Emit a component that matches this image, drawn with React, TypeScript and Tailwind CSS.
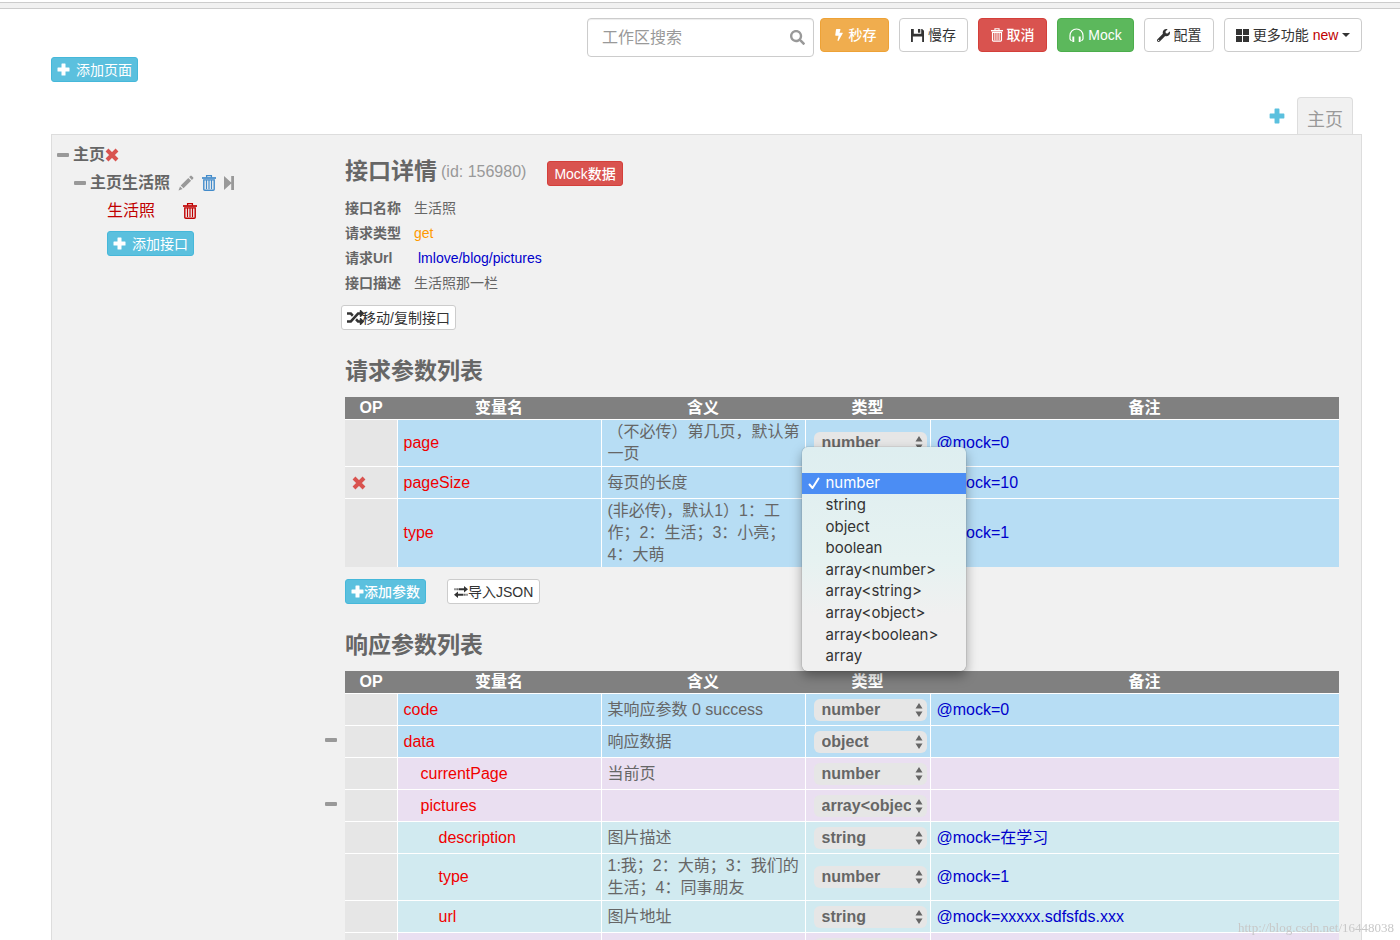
import { useState } from 'react';
import { FaBolt, FaRandom, FaSearch, FaWrench } from 'react-icons/fa';

type Param = {
  name: string;
  meaning: string;
  type: string;
  remark: string;
  level: number;
  collapsible?: boolean;
  removable?: boolean;
  menuOpen?: boolean;
};

const TYPES = [
  '',
  'number',
  'string',
  'object',
  'boolean',
  'array<number>',
  'array<string>',
  'array<object>',
  'array<boolean>',
  'array',
];

const REQUEST_PARAMS: Param[] = [
  { name: 'page', meaning: '（不必传）第几页，默认第一页', type: 'number', remark: '@mock=0', level: 0 },
  { name: 'pageSize', meaning: '每页的长度', type: 'number', remark: '@mock=10', level: 0, removable: true, menuOpen: true },
  { name: 'type', meaning: '(非必传)，默认1）1：工作；2：生活；3：小亮；4：大萌', type: 'number', remark: '@mock=1', level: 0 },
];

const RESPONSE_PARAMS: Param[] = [
  { name: 'code', meaning: '某响应参数 0 success', type: 'number', remark: '@mock=0', level: 0 },
  { name: 'data', meaning: '响应数据', type: 'object', remark: '', level: 0, collapsible: true },
  { name: 'currentPage', meaning: '当前页', type: 'number', remark: '', level: 1 },
  { name: 'pictures', meaning: '', type: 'array<object>', remark: '', level: 1, collapsible: true },
  { name: 'description', meaning: '图片描述', type: 'string', remark: '@mock=在学习', level: 2 },
  { name: 'type', meaning: '1:我；2：大萌；3：我们的生活；4：同事朋友', type: 'number', remark: '@mock=1', level: 2 },
  { name: 'url', meaning: '图片地址', type: 'string', remark: '@mock=xxxxx.sdfsfds.xxx', level: 2 },
  { name: 'sum', meaning: '一共有多少页', type: 'number', remark: '', level: 1 },
];

const LEVEL_BG = ['bg-[#b7ddf4]', 'bg-[#eadff1]', 'bg-[#d1eaf0]'];
const LEVEL_PAD = ['pl-[6px]', 'pl-[23px]', 'pl-[41px]'];

function TrashIcon({ size }: { size: number }) {
  return (
    <svg width={size} height={size + 2} viewBox="0 0 14 16" fill="none" stroke="currentColor" aria-hidden="true">
      <path d="M4.600 2.400V.7h4.800v1.700" strokeWidth="1.300" />
      <path d="M0 3h14" strokeWidth="1.700" />
      <path d="M1.800 4.900h10.400v9.300c0 .6-.4 1-1 1H2.800c-.6 0-1-.4-1-1z" strokeWidth="1.400" />
      <path d="M4.500 5v9M7 5v9M9.500 5v9" strokeWidth="1.200" />
    </svg>
  );
}

function PlusIcon({ size }: { size: number }) {
  return (
    <svg width={size} height={size} viewBox="0 0 13 13" fill="currentColor" aria-hidden="true">
      <path d="M5 .5h3a.5.5 0 0 1 .5.5v3.500H12a.5.5 0 0 1 .5.5v3a.5.5 0 0 1-.5.5H8.500V12a.5.5 0 0 1-.5.5H5a.5.5 0 0 1-.5-.5V8.500H1a.5.5 0 0 1-.5-.5V5a.5.5 0 0 1 .5-.5h3.500V1a.5.5 0 0 1 .5-.5z" />
    </svg>
  );
}

function CrossIcon() {
  return (
    <svg width="14" height="14" viewBox="0 0 14 14" fill="none" stroke="currentColor" strokeWidth="4" aria-hidden="true">
      <path d="M2 2l10 10M12 2L2 12" />
    </svg>
  );
}

function PencilIcon() {
  return (
    <svg width="16" height="16" viewBox="0 0 16 16" fill="currentColor" aria-hidden="true">
      <path d="M12.300.9a1 1 0 0 1 1.400 0l1.400 1.400a1 1 0 0 1 0 1.400l-1.200 1.200-2.800-2.800zM10.300 2.900l2.800 2.800-7.600 7.600-2.800-2.800zM2 11.400l2.600 2.600L.5 15.500z" />
    </svg>
  );
}

function SkipIcon() {
  return (
    <svg width="10" height="14" viewBox="0 0 10 14" fill="currentColor" aria-hidden="true">
      <path d="M0 0l7.200 6.500V0H10v14H7.200V7.500L0 14z" />
    </svg>
  );
}

function FloppyIcon() {
  return (
    <svg width="13" height="13" viewBox="0 0 14 14" fill="currentColor" aria-hidden="true">
      <path d="M0 0h3v5h8V0h1l2 2v12h-2V8H2v6H0z" />
      <path d="M7.500 0H10v4H7.500z" />
    </svg>
  );
}

function HeadphonesIcon() {
  return (
    <svg width="15" height="15" viewBox="0 0 15 15" fill="none" stroke="currentColor" aria-hidden="true">
      <path d="M2.500 13L1 11V7.500a6.500 6.500 0 0 1 13 0V11l-1.500 2" strokeWidth="1.200" />
      <path d="M4.300 8.500v5.500M10.700 8.500v5.500" strokeWidth="1.900" />
    </svg>
  );
}

function GridIcon() {
  return (
    <svg width="13" height="13" viewBox="0 0 13 13" fill="currentColor" aria-hidden="true">
      <path d="M0 0h6v6H0zM7 0h6v6H7zM0 7h6v6H0zM7 7h6v6H7z" />
    </svg>
  );
}

function TransferIcon() {
  return (
    <svg width="14" height="12" viewBox="0 0 14 12" fill="currentColor" aria-hidden="true">
      <path d="M4.500 2.200H10V0l4 3.300-4 3.200V4.300H4.500zM2.500 2.200h1.200v2.100H2.500zM.5 2.200h1v2.100h-1z" />
      <path d="M9.500 7.700H4V5.500L0 8.800 4 12V9.800h5.500zM10.300 7.700h1.200v2.100h-1.200zM12.500 7.700h1v2.100h-1z" />
    </svg>
  );
}

function Minus({ label }: { label: string }) {
  return (
    <button type="button" aria-label={label} className="flex h-4 w-3 items-center">
      <span className="h-1 w-full rounded-[1px] bg-[#999]"></span>
    </button>
  );
}

function TypeMenu() {
  const [picked, setPicked] = useState('number');

  return (
    <div
      role="listbox"
      aria-label="类型"
      className="absolute -left-1 -top-5 z-10 grid h-[224px] w-[164px] auto-rows-fr rounded-md bg-gradient-to-b from-[#deeef0] via-[#e6f2f1] via-50% to-[#f0f0f0] to-75% py-1 font-['Inter','Liberation_Sans',sans-serif] text-[15px] text-[#333] shadow-[0_5px_12px_rgba(0,0,0,0.35),0_0_1px_rgba(0,0,0,0.6)]"
    >
      {TYPES.map((type) => (
        <button
          key={type}
          type="button"
          role="option"
          aria-label={type || '空'}
          aria-selected={type === picked}
          onClick={() => setPicked(type)}
          className={`flex items-center text-left leading-5 ${type === picked ? 'bg-[#4b8df4] text-white' : ''}`}
        >
          <span className="flex w-6 justify-center">
            {type === picked && (
              <svg width="12" height="13" viewBox="0 0 12 13" fill="none" stroke="currentColor" strokeWidth="2">
                <path d="M1.500 7.500l3 3.500L10.500 1.500" strokeLinecap="round" strokeLinejoin="round" />
              </svg>
            )}
          </span>
          {type}
        </button>
      ))}
    </div>
  );
}

function TypeSelect({ name, value }: { name: string; value: string }) {
  return (
    <div className="relative ml-2 w-[113px]">
      <select
        aria-label={`${name} 类型`}
        defaultValue={value}
        className="block h-[22px] w-full appearance-none rounded-md bg-[#e6e6e6] pl-2 pr-4 text-base font-bold leading-[22px] text-[#666]"
      >
        {TYPES.map((type) => (
          <option key={type}>{type}</option>
        ))}
      </select>
      <svg className="pointer-events-none absolute right-1 top-1" width="8" height="14" viewBox="0 0 8 14" fill="#666" aria-hidden="true">
        <path d="M4 0l3.500 5.500h-7zM4 14l3.500-5.500h-7z" />
      </svg>
    </div>
  );
}

function ParamTable({ label, params }: { label: string; params: Param[] }) {
  return (
    <table aria-label={label} className="w-full table-fixed border-collapse text-base leading-[22px]">
      <colgroup>
        <col className="w-[52px]" />
        <col className="w-[204px]" />
        <col className="w-[204px]" />
        <col className="w-[125px]" />
        <col />
      </colgroup>
      <thead>
        <tr className="bg-[#808080] font-bold text-white">
          <th>OP</th>
          <th>变量名</th>
          <th>含义</th>
          <th>类型</th>
          <th className="pl-5">备注</th>
        </tr>
      </thead>
      <tbody>
        {params.map((param) => (
          <tr key={param.name} className={`h-8 border-t border-white ${LEVEL_BG[param.level]}`}>
            <td className="relative bg-[#e6e6e6] px-[7px]">
              {param.collapsible && (
                <div className="absolute -left-5 top-1.5">
                  <Minus label={`折叠 ${param.name}`} />
                </div>
              )}
              {param.removable && (
                <button type="button" aria-label={`删除 ${param.name}`} className="block text-[#d9534f]">
                  <CrossIcon />
                </button>
              )}
            </td>
            <td className={`border-l border-white text-[#f00000] ${LEVEL_PAD[param.level]}`}>{param.name}</td>
            <td className="border-l border-white py-px pl-[6px] text-[#666]">{param.meaning}</td>
            <td className="relative border-l border-white">
              <TypeSelect name={param.name} value={param.type} />
              {param.menuOpen && <TypeMenu />}
            </td>
            <td className="border-l border-white pl-[6px] text-[#0000cc]">{param.remark}</td>
          </tr>
        ))}
      </tbody>
    </table>
  );
}

function Toolbar() {
  const btn = 'flex h-[34px] items-center justify-center gap-1 rounded border text-sm';
  const plain = 'border-[#ccc] bg-white text-[#333]';

  return (
    <div className="flex items-start justify-end gap-[10px]">
      <label className="-mr-1 flex h-[39px] w-[227px] items-center rounded border border-[#ccc] bg-white px-[14px] shadow-[inset_0_1px_1px_rgba(0,0,0,0.075)]">
        <input
          type="search"
          aria-label="工作区搜索"
          placeholder="工作区搜索"
          className="w-full min-w-0 text-base outline-none placeholder:text-[#999]"
        />
        <FaSearch size={15} className="mr-[-6px] shrink-0 text-[#999]" />
      </label>
      <button type="button" className={`${btn} w-[69px] border-[#eea236] bg-[#f0ad4e] font-medium text-white`}>
        <FaBolt size={12} />秒存
      </button>
      <button type="button" className={`${btn} w-[69px] ${plain}`}>
        <FloppyIcon />慢存
      </button>
      <button type="button" className={`${btn} w-[69px] border-[#d43f3a] bg-[#d9534f] font-medium text-white`}>
        <TrashIcon size={12} />取消
      </button>
      <button type="button" className={`${btn} w-[77px] border-[#4cae4c] bg-[#5cb85c] text-white`}>
        <HeadphonesIcon />Mock
      </button>
      <button type="button" className={`${btn} w-[70px] ${plain}`}>
        <FaWrench size={13} />配置
      </button>
      <button type="button" className={`${btn} w-[138px] ${plain}`}>
        <GridIcon />更多功能
        <span className="text-[#c00000]">new</span>
        <span className="border-x-4 border-t-4 border-x-transparent border-t-[#333]"></span>
      </button>
    </div>
  );
}

function Sidebar() {
  return (
    <nav aria-label="接口列表" className="w-[289px] shrink-0 pl-[5px] pt-[6px] text-base leading-7 text-[#666]">
      <div className="flex items-center gap-1">
        <Minus label="折叠 主页" />
        <span className="font-bold">主页</span>
        <button type="button" aria-label="删除 主页" className="-ml-1 text-[#d9534f]">
          <CrossIcon />
        </button>
      </div>
      <div className="flex items-center gap-2 pl-[17px]">
        <Minus label="折叠 主页生活照" />
        <span className="-ml-1 font-bold">主页生活照</span>
        <button type="button" aria-label="编辑" className="text-[#999]"><PencilIcon /></button>
        <button type="button" aria-label="删除 主页生活照" className="text-[#428bca]"><TrashIcon size={14} /></button>
        <button type="button" aria-label="移动" className="text-[#999]"><SkipIcon /></button>
      </div>
      <div className="flex items-center gap-7 pl-[50px] text-[#c00000]">
        <a href="#pictures">生活照</a>
        <button type="button" aria-label="删除 生活照"><TrashIcon size={14} /></button>
      </div>
      <div className="pl-[50px] pt-[6px]">
        <AddButton>添加接口</AddButton>
      </div>
    </nav>
  );
}

function AddButton({ children }: { children: string }) {
  return (
    <button
      type="button"
      className="flex h-[25px] items-center gap-[6px] rounded-[3px] border border-[#46b8da] bg-[#5bc0de] px-[5px] text-sm leading-5 text-white"
    >
      <PlusIcon size={13} />{children}
    </button>
  );
}

function Detail() {
  const small = 'flex h-[25px] items-center rounded-[3px] border text-sm leading-5';
  const heading = 'text-[23px] font-bold leading-[26px] text-[#666]';

  return (
    <main className="min-w-0 flex-1 pl-1 pr-[22px] pt-[23px]">
      <div className="flex items-end">
        <h2 className={heading}>接口详情</h2>
        <span className="ml-1 text-base leading-6 text-[#999]">(id: 156980)</span>
        <button type="button" className={`${small} -mb-[2px] ml-[21px] border-[#d43f3a] bg-[#d9534f] px-[6px] font-medium text-white`}>
          Mock数据
        </button>
      </div>

      <dl className="mt-3 grid grid-cols-[69px_1fr] text-sm leading-[25px] text-[#666]">
        <dt className="font-bold">接口名称</dt>
        <dd>生活照</dd>
        <dt className="font-bold">请求类型</dt>
        <dd className="text-[#f90]">get</dd>
        <dt className="font-bold">请求Url</dt>
        <dd className="pl-1"><a href="#url" className="text-[#0000cc]">lmlove/blog/pictures</a></dd>
        <dt className="font-bold">接口描述</dt>
        <dd>生活照那一栏</dd>
      </dl>

      <button type="button" className={`${small} -ml-1 mt-[9px] border-[#ccc] bg-white px-[5px] text-[#333]`}>
        <FaRandom size={17} className="-mr-[2px]" />移动/复制接口
      </button>

      <h2 className={`${heading} mb-[13px] mt-7`}>请求参数列表</h2>
      <ParamTable label="请求参数列表" params={REQUEST_PARAMS} />

      <div className="mt-3 flex gap-[21px]">
        <button type="button" className={`${small} border-[#46b8da] bg-[#5bc0de] px-[5px] font-medium text-white`}>
          <PlusIcon size={13} />添加参数
        </button>
        <button type="button" className={`${small} border-[#ccc] bg-white px-[6px] text-[#333]`}>
          <TransferIcon />导入JSON
        </button>
      </div>

      <h2 className={`${heading} mb-[13px] mt-7`}>响应参数列表</h2>
      <ParamTable label="响应参数列表" params={RESPONSE_PARAMS} />
    </main>
  );
}

export default function App() {
  return (
    <div className="flex h-screen flex-col overflow-hidden bg-white font-['Liberation_Sans','Noto_Sans_CJK_SC',sans-serif]">
      <div className="mt-0.5 h-[7px] shrink-0 border-y border-[#ccc] bg-[#f1f1f1]"></div>
      <header className="shrink-0 pl-[51px] pr-[38px] pt-[9px]">
        <Toolbar />
        <AddButton>添加页面</AddButton>
        <div className="mt-[15px] flex items-center justify-end gap-3 pr-[9px]">
          <button type="button" aria-label="添加标签" className="text-[#5bc0de]"><PlusIcon size={16} /></button>
          <a href="#home" className="flex h-[37px] items-center rounded-t border border-b-0 border-[#ddd] bg-[#f1f1f1] px-[9px] pt-2 text-lg text-[#999]">
            主页
          </a>
        </div>
      </header>
      <div className="ml-[51px] mr-[38px] flex min-h-0 flex-1 border border-b-0 border-[#ddd] bg-[#f1f1f1]">
        <Sidebar />
        <Detail />
      </div>
      <div className="pointer-events-none fixed bottom-1 right-[6px] font-['Liberation_Serif',serif] text-[13px] leading-4 text-[#c8c8c8]">
        http://blog.csdn.net/16448038
      </div>
    </div>
  );
}
